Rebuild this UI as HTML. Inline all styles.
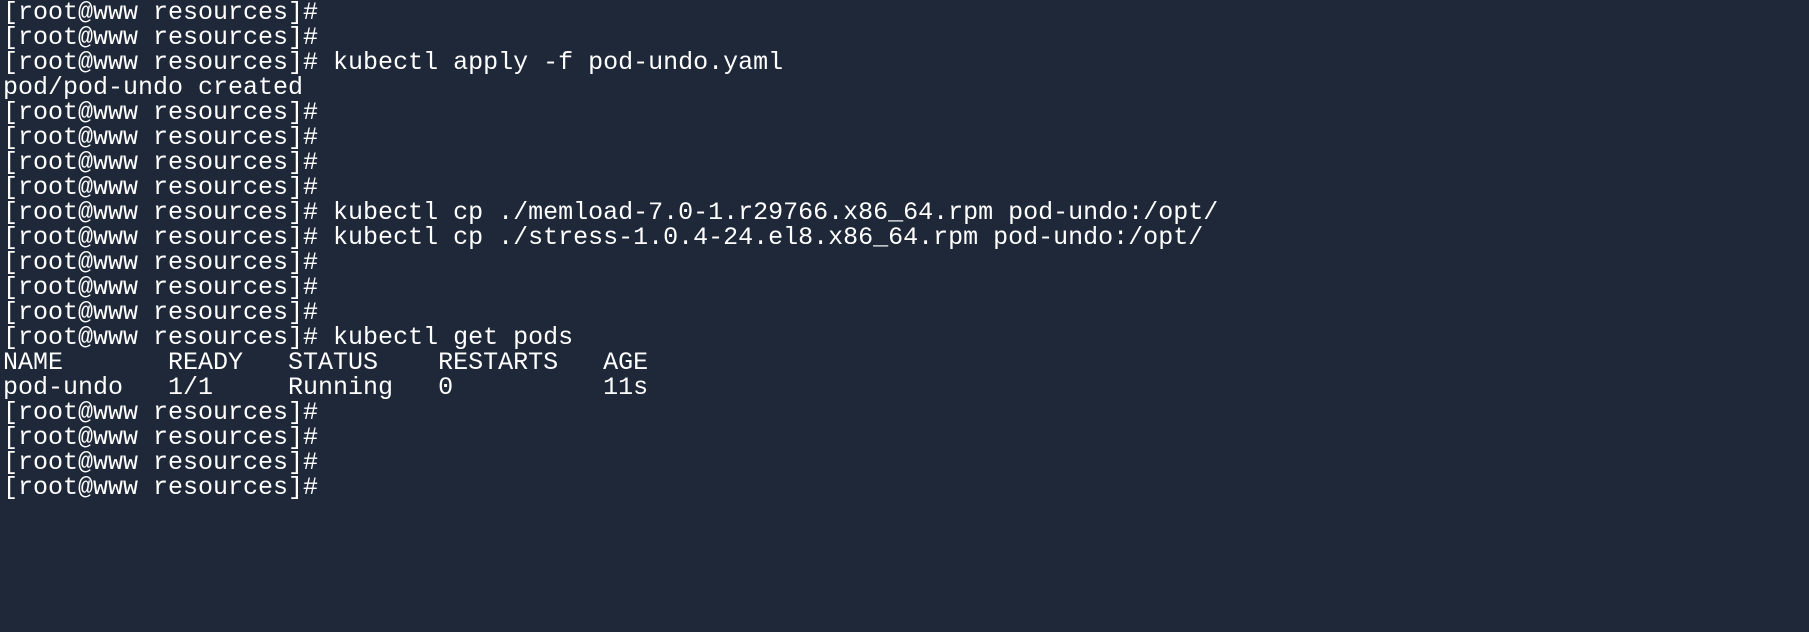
<!DOCTYPE html>
<html><head><meta charset="utf-8"><style>
html,body{margin:0;padding:0;background:#1e2838;width:1809px;height:632px;overflow:hidden}
pre{margin:0;padding:0 0 0 3px;color:#fff;font-family:"Liberation Mono",monospace;font-size:25px;line-height:25px}
</style></head><body><pre>[root@www resources]#
[root@www resources]#
[root@www resources]# kubectl apply -f pod-undo.yaml
pod/pod-undo created
[root@www resources]#
[root@www resources]#
[root@www resources]#
[root@www resources]#
[root@www resources]# kubectl cp ./memload-7.0-1.r29766.x86_64.rpm pod-undo:/opt/
[root@www resources]# kubectl cp ./stress-1.0.4-24.el8.x86_64.rpm pod-undo:/opt/
[root@www resources]#
[root@www resources]#
[root@www resources]#
[root@www resources]# kubectl get pods
NAME       READY   STATUS    RESTARTS   AGE
pod-undo   1/1     Running   0          11s
[root@www resources]#
[root@www resources]#
[root@www resources]#
[root@www resources]#</pre></body></html>
